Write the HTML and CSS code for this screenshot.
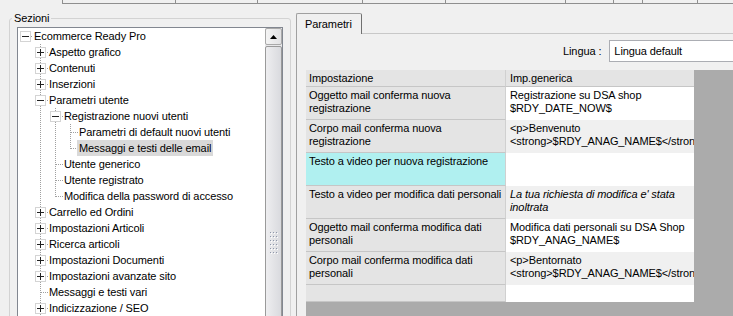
FILE: index.html
```html
<!DOCTYPE html>
<html lang="it">
<head>
<meta charset="utf-8">
<title>Sezioni - Parametri</title>
<link rel="stylesheet" href="styles.css">
</head>
<body>
<div class="topstrip">
  <span class="stub s1"></span><span class="stub s2"></span><span class="stub s3"></span><span class="stub s4"></span><span class="stub s5"></span><span class="stub s6"></span><span class="stub s7"></span><span class="stub s8"></span><span class="stub s9"></span>
</div>
<div class="main">
  <div class="group">
    <div class="legend">Sezioni</div>
    <div class="tree">
      <div class="tree-body">
        <div class="row"><svg class="g" viewBox="0 0 15 16"><path class="ln" d="M13 8.5H15"/><rect class="bx" x="2.5" y="3.5" width="10" height="10"/><path class="pm" d="M4 8.5H11"/></svg><span class="lbl">Ecommerce Ready Pro</span></div>
        <div class="row"><span class="g"></span><svg class="g" viewBox="0 0 15 16"><path class="ln" d="M7.5 0V16M8 8.5H15"/><rect class="bx" x="2.5" y="3.5" width="10" height="10"/><path class="pm" d="M4 8.5H11M7.5 5V12"/></svg><span class="lbl">Aspetto grafico</span></div>
        <div class="row"><span class="g"></span><svg class="g" viewBox="0 0 15 16"><path class="ln" d="M7.5 0V16M8 8.5H15"/><rect class="bx" x="2.5" y="3.5" width="10" height="10"/><path class="pm" d="M4 8.5H11M7.5 5V12"/></svg><span class="lbl">Contenuti</span></div>
        <div class="row"><span class="g"></span><svg class="g" viewBox="0 0 15 16"><path class="ln" d="M7.5 0V16M8 8.5H15"/><rect class="bx" x="2.5" y="3.5" width="10" height="10"/><path class="pm" d="M4 8.5H11M7.5 5V12"/></svg><span class="lbl">Inserzioni</span></div>
        <div class="row"><span class="g"></span><svg class="g" viewBox="0 0 15 16"><path class="ln" d="M7.5 0V16M8 8.5H15"/><rect class="bx" x="2.5" y="3.5" width="10" height="10"/><path class="pm" d="M4 8.5H11"/></svg><span class="lbl">Parametri utente</span></div>
        <div class="row"><span class="g"></span><svg class="g" viewBox="0 0 15 16"><path class="ln" d="M7.5 0V16"/></svg><svg class="g" viewBox="0 0 15 16"><path class="ln" d="M7.5 0V16M8 8.5H15"/><rect class="bx" x="2.5" y="3.5" width="10" height="10"/><path class="pm" d="M4 8.5H11"/></svg><span class="lbl">Registrazione nuovi utenti</span></div>
        <div class="row"><span class="g"></span><svg class="g" viewBox="0 0 15 16"><path class="ln" d="M7.5 0V16"/></svg><svg class="g" viewBox="0 0 15 16"><path class="ln" d="M7.5 0V16"/></svg><svg class="g" viewBox="0 0 15 16"><path class="ln" d="M7.5 0V16M8 8.5H15"/></svg><span class="lbl">Parametri di default nuovi utenti</span></div>
        <div class="row"><span class="g"></span><svg class="g" viewBox="0 0 15 16"><path class="ln" d="M7.5 0V16"/></svg><svg class="g" viewBox="0 0 15 16"><path class="ln" d="M7.5 0V16"/></svg><svg class="g" viewBox="0 0 15 16"><path class="ln" d="M7.5 0V9M8 8.5H15"/></svg><span class="lbl sel">Messaggi e testi delle email</span></div>
        <div class="row"><span class="g"></span><svg class="g" viewBox="0 0 15 16"><path class="ln" d="M7.5 0V16"/></svg><svg class="g" viewBox="0 0 15 16"><path class="ln" d="M7.5 0V16M8 8.5H15"/></svg><span class="lbl">Utente generico</span></div>
        <div class="row"><span class="g"></span><svg class="g" viewBox="0 0 15 16"><path class="ln" d="M7.5 0V16"/></svg><svg class="g" viewBox="0 0 15 16"><path class="ln" d="M7.5 0V16M8 8.5H15"/></svg><span class="lbl">Utente registrato</span></div>
        <div class="row"><span class="g"></span><svg class="g" viewBox="0 0 15 16"><path class="ln" d="M7.5 0V16"/></svg><svg class="g" viewBox="0 0 15 16"><path class="ln" d="M7.5 0V9M8 8.5H15"/></svg><span class="lbl">Modifica della password di accesso</span></div>
        <div class="row"><span class="g"></span><svg class="g" viewBox="0 0 15 16"><path class="ln" d="M7.5 0V16M8 8.5H15"/><rect class="bx" x="2.5" y="3.5" width="10" height="10"/><path class="pm" d="M4 8.5H11M7.5 5V12"/></svg><span class="lbl">Carrello ed Ordini</span></div>
        <div class="row"><span class="g"></span><svg class="g" viewBox="0 0 15 16"><path class="ln" d="M7.5 0V16M8 8.5H15"/><rect class="bx" x="2.5" y="3.5" width="10" height="10"/><path class="pm" d="M4 8.5H11M7.5 5V12"/></svg><span class="lbl">Impostazioni Articoli</span></div>
        <div class="row"><span class="g"></span><svg class="g" viewBox="0 0 15 16"><path class="ln" d="M7.5 0V16M8 8.5H15"/><rect class="bx" x="2.5" y="3.5" width="10" height="10"/><path class="pm" d="M4 8.5H11M7.5 5V12"/></svg><span class="lbl">Ricerca articoli</span></div>
        <div class="row"><span class="g"></span><svg class="g" viewBox="0 0 15 16"><path class="ln" d="M7.5 0V16M8 8.5H15"/><rect class="bx" x="2.5" y="3.5" width="10" height="10"/><path class="pm" d="M4 8.5H11M7.5 5V12"/></svg><span class="lbl">Impostazioni Documenti</span></div>
        <div class="row"><span class="g"></span><svg class="g" viewBox="0 0 15 16"><path class="ln" d="M7.5 0V16M8 8.5H15"/><rect class="bx" x="2.5" y="3.5" width="10" height="10"/><path class="pm" d="M4 8.5H11M7.5 5V12"/></svg><span class="lbl">Impostazioni avanzate sito</span></div>
        <div class="row"><span class="g"></span><svg class="g" viewBox="0 0 15 16"><path class="ln" d="M7.5 0V16M8 8.5H15"/></svg><span class="lbl">Messaggi e testi vari</span></div>
        <div class="row"><span class="g"></span><svg class="g" viewBox="0 0 15 16"><path class="ln" d="M7.5 0V16M8 8.5H15"/><rect class="bx" x="2.5" y="3.5" width="10" height="10"/><path class="pm" d="M4 8.5H11M7.5 5V12"/></svg><span class="lbl">Indicizzazione / SEO</span></div>
      </div>
      <div class="vscroll">
        <div class="sbtn"><svg width="7" height="4" viewBox="0 0 7 4"><path d="M0 4L3.5 0L7 4Z" fill="#000"/></svg></div>
        <div class="thumb">
          <svg class="grip" width="8" height="23" viewBox="0 0 8 23"><defs><pattern id="gp" width="3" height="4" patternUnits="userSpaceOnUse"><rect width="1" height="1" fill="#8e97aa"/><rect x="1" y="1" width="1" height="1" fill="#ffffff"/></pattern></defs><rect width="8" height="23" fill="url(#gp)"/></svg>
        </div>
      </div>
    </div>
  </div>
  <div class="tabctl">
    <div class="tabrow">
      <div class="tab">Parametri</div>
      <div class="tabfill"></div>
    </div>
    <div class="page">
      <div class="lingua">
        <span class="lab">Lingua :</span>
        <div class="combo">Lingua default</div>
      </div>
      <div class="grid">
        <div class="gtable">
          <div class="c k hd">Impostazione</div>
          <div class="c v hd">Imp.generica</div>

          <div class="c k">Oggetto mail conferma nuova<br>registrazione</div>
          <div class="c v w">Registrazione su DSA shop<br>$RDY_DATE_NOW$</div>

          <div class="c k">Corpo mail conferma nuova<br>registrazione</div>
          <div class="c v a">&lt;p&gt;Benvenuto<br>&lt;strong&gt;$RDY_ANAG_NAME$&lt;/strong&gt;</div>

          <div class="c k cur">Testo a video per nuova registrazione</div>
          <div class="c v w"></div>

          <div class="c k">Testo a video per modifica dati personali</div>
          <div class="c v a it">La tua richiesta di modifica e' stata<br>inoltrata</div>

          <div class="c k">Oggetto mail conferma modifica dati<br>personali</div>
          <div class="c v w">Modifica dati personali su DSA Shop<br>$RDY_ANAG_NAME$</div>

          <div class="c k">Corpo mail conferma modifica dati<br>personali</div>
          <div class="c v a">&lt;p&gt;Bentornato<br>&lt;strong&gt;$RDY_ANAG_NAME$&lt;/strong&gt;</div>

          <div class="c k em"></div>
          <div class="c v w em"></div>
        </div>
      </div>
    </div>
  </div>
</div>
</body>
</html>
```
FILE: styles.css
```css
html, body {
  margin: 0;
  width: 733px;
  height: 316px;
  overflow: hidden;
}
body {
  background: #f0f0f0;
  color: #000;
  font-family: "Liberation Sans", Arial, sans-serif;
  font-size: 11px;
  line-height: 13px;
  letter-spacing: -0.1px;
}

/* clipped tab strip at the very top */
.topstrip {
  display: flex;
  height: 4px;
  padding-left: 62px;
}
.stub {
  flex: none;
  height: 3px;
  border-left: 1px solid #8f8f8f;
  border-bottom: 1px solid #8f8f8f;
}
.s1 { width: 112px; }
.s2 { width: 81px; }
.s3 { width: 104px; }
.s4 { width: 82px; }
.s5 { width: 119px; }
.s6 { width: 47px; }
.s7 { width: 28px; }
.s8 { width: 54px; }
.s9 { flex: 1; }

.main {
  display: flex;
  align-items: flex-start;
}

/* group box "Sezioni" */
.group {
  box-sizing: border-box;
  width: 282px;
  height: 330px;
  margin: 14px 0 0 9px;
  padding: 0 7px;
  border: 1px solid #d3d3d3;
  border-radius: 3px;
}
.legend {
  width: fit-content;
  margin: -7px 0 0 -5px;
  padding: 0 2px;
  background: #f0f0f0;
}

/* tree view */
.tree {
  display: flex;
  height: 320px;
  margin-top: 2px;
  border: 1px solid #828790;
  background: #fff;
}
.tree-body {
  flex: 1;
  min-width: 0;
}
.row {
  display: flex;
  align-items: center;
  height: 16px;
  white-space: nowrap;
}
.g {
  flex: none;
  display: block;
  width: 15px;
  height: 16px;
}
.ln {
  fill: none;
  stroke: #a0a0a0;
  stroke-width: 1;
  stroke-dasharray: 1 1;
}
.bx {
  fill: #fff;
  stroke: #d4d4d4;
  stroke-width: 1;
}
.pm {
  fill: none;
  stroke: #222;
  stroke-width: 1;
}
.lbl {
  margin-left: -1px;
  padding: 0 2px;
  line-height: 16px;
}
.sel {
  background: #d9d9d9;
}

/* scrollbar */
.vscroll {
  flex: none;
  width: 17px;
  display: flex;
  flex-direction: column;
  background: #e8e8ea;
}
.sbtn {
  flex: none;
  box-sizing: border-box;
  height: 17px;
  border: 1px solid #a9a9a9;
  border-radius: 2px;
  background: linear-gradient(90deg, #f4f4f4, #e2e2e4);
  display: flex;
  align-items: center;
  justify-content: center;
}
.thumb {
  flex: none;
  box-sizing: border-box;
  height: 394px;
  margin-top: 1px;
  border: 1px solid #9a9a9a;
  border-radius: 2px;
  background: linear-gradient(90deg, #eeeef0, #d9dade);
  display: flex;
  align-items: center;
  justify-content: center;
}
.grip {
  display: block;
}

/* tab control */
.tabctl {
  flex: 1;
  min-width: 0;
  margin-left: 5px;
  height: 330px;
  display: flex;
  flex-direction: column;
}
.tabrow {
  display: flex;
  margin-top: 9px;
}
.tab {
  flex: none;
  padding: 4px 9px 3px 8px;
  border: 1px solid #a0a0a0;
  border-right-color: #707070;
  border-bottom: none;
  border-radius: 2px 2px 0 0;
}
.tabfill {
  flex: 1;
  border-bottom: 1px solid #c8c8c8;
}
.page {
  flex: 1;
  min-height: 0;
  overflow: hidden;
  padding: 6px 0 0 9px;
  border-left: 1px solid #a0a0a0;
}
.lingua {
  display: flex;
  align-items: center;
  padding-left: 257px;
}
.lab {
  flex: none;
}
.combo {
  flex: none;
  box-sizing: border-box;
  width: 200px;
  height: 22px;
  margin-left: 8px;
  padding-left: 4px;
  line-height: 20px;
  border: 1px solid #abadb3;
  background: #fff;
}

/* data grid */
.grid {
  margin-top: 8px;
  height: 260px;
  background: #ababab;
}
.gtable {
  display: grid;
  grid-template-columns: 200px 188px;
}
.c {
  box-sizing: border-box;
  height: 33px;
  padding-top: 2px;
  overflow: hidden;
  white-space: nowrap;
  border-bottom: 1px solid #c6c6c6;
}
.k {
  padding-left: 3px;
  background: #e4e4e4;
  border-right: 1px solid #d0d0d0;
}
.v {
  padding-left: 4px;
}
.hd {
  height: 17px;
  background: #e4e4e4;
}
.w {
  background: #fff;
  border-bottom-color: #fff;
}
.a {
  background: #f0f0f0;
  border-bottom-color: #f0f0f0;
}
.cur {
  background: #b0f0f0;
}
.it {
  font-style: italic;
}
.em {
  height: 17px;
}
```
